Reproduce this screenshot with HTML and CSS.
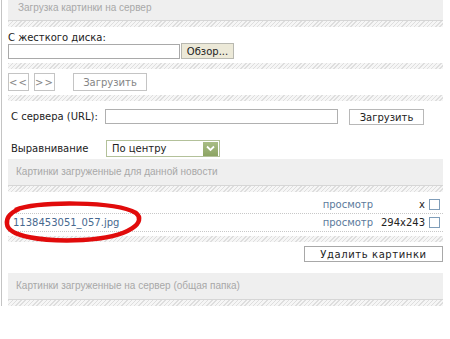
FILE: index.html
```html
<!DOCTYPE html>
<html lang="ru">
<head>
    <meta charset="UTF-8">
    <title>Загрузка картинки</title>
    <link rel="stylesheet" href="styles.css">
</head>
<body>
    <div class="page">
        <div class="head head-cut">Загрузка картинки на сервер</div>
        <div class="hatch"></div>

        <div class="label">С жесткого диска:</div>
        <div class="file-row">
            <span class="file-input"></span>
            <button class="btn btn-browse">Обзор...</button>
        </div>
        <div class="hatch"></div>

        <div class="nav-row">
            <button class="btn btn-light btn-arrow">&lt;&lt;</button>
            <button class="btn btn-light btn-arrow">&gt;&gt;</button>
            <button class="btn btn-light btn-upload">Загрузить</button>
        </div>
        <div class="hatch"></div>

        <div class="url-row">
            <span class="row-label">С сервера (URL):</span>
            <span class="url-input"></span>
            <button class="btn btn-url">Загрузить</button>
        </div>

        <div class="align-row">
            <span class="row-label align-label">Выравнивание</span>
            <span class="select">
                <span class="select-value">По центру</span>
                <span class="select-arrow">
                    <svg width="9" height="7" viewBox="0 0 9 7"><path d="M1 1.5 L4.5 5 L8 1.5" fill="none" stroke="#fff" stroke-width="1.8"/></svg>
                </span>
            </span>
        </div>

        <div class="head">Картинки загруженные для данной новости</div>
        <div class="hatch"></div>

        <div class="files">
            <div class="file">
                <span class="file-name"></span>
                <a class="file-view">просмотр</a>
                <span class="file-size">x</span>
                <span class="check"></span>
            </div>
            <div class="file">
                <a class="file-name">1138453051_057.jpg</a>
                <a class="file-view">просмотр</a>
                <span class="file-size">294x243</span>
                <span class="check"></span>
            </div>
            <svg class="mark" width="142" height="46" viewBox="0 0 142 46">
                <path d="M12 11 C 36 2, 112 2, 133 14 C 143 22, 130 38, 80 41 C 38 43, 5 37, 4 25 C 3 18, 9 13, 16 10" fill="none" stroke="#e10b0b" stroke-width="4.5"/>
            </svg>
        </div>
        <div class="hatch"></div>

        <div class="actions">
            <button class="btn btn-delete">Удалить картинки</button>
        </div>

        <div class="head head-last">Картинки загруженные на сервер (общая папка)</div>
        <div class="hatch"></div>
    </div>
</body>
</html>
```

FILE: styles.css
```css
* {
    box-sizing: border-box;
    margin: 0;
    padding: 0;
}

body {
    font-family: 'DejaVu Sans', Verdana, sans-serif;
    font-size: 10px;
    color: #222;
    background: #fff;
    width: 450px;
    height: 339px;
    overflow: hidden;
}

.page {
    margin-left: 1px;
    border-left: 1px solid #c4c4c4;
    padding-left: 6px;
    width: 442px;
}

.head {
    background: #efefef;
    border-bottom: 1px solid #d6d6d6;
    color: #a8a8a8;
    font-family: 'Liberation Sans', Arial, sans-serif;
    font-size: 10px;
    height: 27px;
    line-height: 26px;
    padding-left: 8px;
    margin-top: 2px;
}

.head-cut {
    height: 21px;
    line-height: 15px;
    margin-top: 0;
    padding-left: 10px;
}

.head-last {
    margin-top: 11px;
}

.hatch {
    height: 6px;
    background: repeating-linear-gradient(135deg, #dedede 0 1px, #f6f6f6 1px 3px);
}

.btn {
    font-family: inherit;
    font-size: 10px;
    background: #fff;
    border: 1px solid #b4b4b4;
    color: #222;
    cursor: pointer;
}

.label {
    margin-top: 4px;
    height: 12px;
    line-height: 13px;
}

.file-row {
    display: flex;
    align-items: flex-start;
    height: 16px;
    margin-bottom: 4px;
}

.file-input {
    display: block;
    width: 172px;
    height: 15px;
    margin-top: 1px;
    border: 1px solid #a9a9a9;
    background: #fff;
}

.btn-browse {
    width: 53px;
    height: 16px;
    margin-left: 1px;
    background: #ece9d8;
    border-color: #b8b8b0;
}

.nav-row {
    display: flex;
    gap: 5px;
    height: 18px;
    margin: 4px 0;
}

.btn-light {
    color: #858585;
    border-color: #c4c4c4;
}

.btn-arrow {
    width: 21px;
    height: 18px;
    letter-spacing: 1px;
}

.btn-upload {
    width: 74px;
    height: 18px;
    margin-left: 13px;
}

.url-row {
    display: flex;
    align-items: flex-start;
    height: 16px;
    margin-top: 8px;
    padding-left: 3px;
}

.row-label {
    line-height: 15px;
    width: 94px;
}

.url-input {
    display: block;
    width: 233px;
    height: 15px;
    border: 1px solid #b0b0b0;
}

.btn-url {
    width: 75px;
    height: 16px;
    margin-left: 11px;
    border-color: #b8b8b8;
}

.align-row {
    display: flex;
    align-items: center;
    height: 17px;
    margin-top: 15px;
    padding-left: 3px;
}

.align-label {
    width: 95px;
}

.select {
    display: flex;
    align-items: center;
    justify-content: space-between;
    width: 114px;
    height: 17px;
    border: 1px solid #b3c19a;
    padding-left: 5px;
    padding-right: 1px;
}

.select-arrow {
    display: flex;
    align-items: center;
    justify-content: center;
    width: 15px;
    height: 14px;
    background: linear-gradient(#a9bd86, #8ca463);
}

.files {
    position: relative;
    padding-top: 4px;
    margin-bottom: 4px;
}

.file {
    display: grid;
    grid-template-columns: 1fr auto 48px 11px;
    column-gap: 4px;
    align-items: center;
    height: 18px;
    border-bottom: 1px dotted #c8c8c8;
    padding: 0 3px 0 5px;
}

.file-name {
    color: #47698f;
}

.file-view {
    color: #5b7a9c;
}

.file-size {
    text-align: right;
    color: #222;
}

.check {
    width: 11px;
    height: 11px;
    border: 1px solid #7f9db9;
    background: #fff;
}

.mark {
    position: absolute;
    left: -5px;
    top: 7px;
}

.actions {
    display: flex;
    justify-content: flex-end;
    margin-top: 4px;
}

.btn-delete {
    width: 139px;
    height: 16px;
    letter-spacing: 0.6px;
    border-color: #a8a8a8;
}
```
